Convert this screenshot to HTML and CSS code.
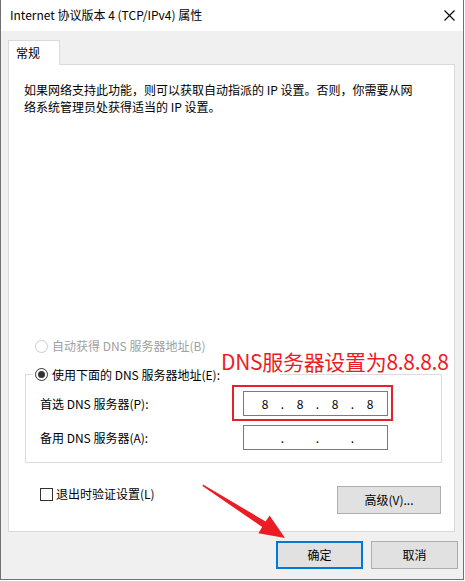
FILE: index.html
```html
<!DOCTYPE html>
<html lang="zh-CN">
<head>
<meta charset="utf-8">
<title>Internet 协议版本 4 (TCP/IPv4) 属性</title>
<link rel="stylesheet" href="styles.css">
</head>
<body>
<div class="window">
  <div class="titlebar">
    <span class="title">Internet 协议版本 4 (TCP/IPv4) 属性</span>
    <svg class="close" width="11" height="11" viewBox="0 0 11 11"><path d="M0.5 0.5 L10.5 10.5 M10.5 0.5 L0.5 10.5" stroke="#000" stroke-width="1.1" fill="none"/></svg>
  </div>
  <div class="content">
    <div class="tabs"><div class="tab">常规</div></div>
    <div class="panel">
      <p class="intro">如果网络支持此功能，则可以获取自动指派的 IP 设置。否则，你需要从网<br>络系统管理员处获得适当的 IP 设置。</p>

      <div class="radio-row disabled"><span class="radio"></span><span>自动获得 DNS 服务器地址(B)</span></div>

      <fieldset class="group">
        <legend class="radio-row"><span class="radio checked"></span><span>使用下面的 DNS 服务器地址(E):</span></legend>
        <div class="field-row">
          <span class="label">首选 DNS 服务器(P):</span>
          <div class="ip-wrap">
            <div class="ip"><span class="oct">8</span><span class="dot">.</span><span class="oct">8</span><span class="dot">.</span><span class="oct">8</span><span class="dot">.</span><span class="oct">8</span></div>
            <div class="mark-box"></div>
          </div>
        </div>
        <div class="field-row">
          <span class="label">备用 DNS 服务器(A):</span>
          <div class="ip-wrap">
            <div class="ip"><span class="oct"></span><span class="dot">.</span><span class="oct"></span><span class="dot">.</span><span class="oct"></span><span class="dot">.</span><span class="oct"></span></div>
          </div>
        </div>
      </fieldset>

      <div class="options-row">
        <label class="check-row"><span class="checkbox"></span><span>退出时验证设置(L)</span></label>
        <button class="btn adv">高级(V)...</button>
      </div>

      <div class="note">DNS服务器设置为8.8.8.8</div>
    </div>
    <div class="actions">
      <button class="btn primary">确定</button>
      <button class="btn">取消</button>
    </div>
  </div>
  <svg class="arrow" width="90" height="62" viewBox="200 480 90 62">
    <polygon points="203,484.5 265.6,521.5 269.6,515.6 285,538 258.4,533.2 262.2,527 202.5,486" fill="#ec1c24"/>
  </svg>
</div>
</body>
</html>
```

FILE: styles.css
```css
* { box-sizing: border-box; }

html, body {
  margin: 0;
  padding: 0;
  background: #ffffff;
}

body {
  font-family: "Noto Sans CJK SC", sans-serif;
  font-size: 12px;
  color: #000;
}

.window {
  position: relative;
  width: 464px;
  height: 580px;
  border: 1px solid #717171;
  border-top: 0;
  background: #f0f0f0;
  display: flex;
  flex-direction: column;
}

.titlebar {
  height: 31px;
  background: #ffffff;
  display: flex;
  align-items: center;
  justify-content: space-between;
  padding: 0 8px 0 9px;
  flex: none;
}

.title {
  line-height: 18px;
  padding-bottom: 1px;
}

.close {
  display: block;
  margin-bottom: 1px;
}

.content {
  padding: 9px 0 0 7px;
  display: flex;
  flex-direction: column;
}

.tabs {
  display: flex;
}

.tab {
  position: relative;
  z-index: 1;
  width: 52px;
  height: 25px;
  margin-bottom: -1px;
  padding: 3px 0 0 7px;
  line-height: 17px;
  background: #ffffff;
  border: 1px solid #d9d9d9;
  border-bottom: 0;
}

.panel {
  position: relative;
  width: 447px;
  height: 468px;
  background: #ffffff;
  border: 1px solid #d9d9d9;
  padding: 0 0 0 15px;
}

.intro {
  margin: 16px 0 0 0;
  line-height: 17px;
}

.radio-row {
  display: flex;
  align-items: center;
  gap: 4px;
  height: 18px;
  line-height: 18px;
}

.panel > .radio-row {
  margin: 222px 0 0 11px;
}

.radio-row.disabled {
  color: #a0a0a0;
}

.radio {
  width: 13px;
  height: 13px;
  border: 1px solid #333333;
  border-radius: 50%;
  background: #ffffff;
  display: flex;
  align-items: center;
  justify-content: center;
  flex: none;
}

.disabled .radio {
  border-color: #cccccc;
}

.radio.checked::after {
  content: "";
  width: 7px;
  height: 7px;
  border-radius: 50%;
  background: #333333;
}

.group {
  width: 417px;
  margin: 10px 0 0 1px;
  padding: 7px 0 12px 0;
  border: 1px solid #dcdcdc;
  min-width: 0;
}

.group legend {
  margin-left: 7px;
  padding: 0 60px 0 2px;
  height: 19px;
  line-height: 19px;
}

.field-row {
  display: grid;
  grid-template-columns: 217px 145px;
  align-items: center;
  height: 25px;
}

.field-row + .field-row {
  margin-top: 9px;
}

.label {
  padding-left: 14px;
  line-height: 18px;
}

.ip-wrap {
  position: relative;
}

.ip {
  height: 25px;
  border: 1px solid #7a7a7a;
  background: #ffffff;
  display: flex;
  align-items: center;
  padding-left: 6px;
  line-height: 18px;
}

.oct {
  width: 30px;
  text-align: center;
}

.dot {
  width: 5px;
  text-align: center;
}

.mark-box {
  position: absolute;
  left: -11px;
  top: -6px;
  width: 161px;
  height: 36px;
  border: 2px solid #e8202a;
}

.options-row {
  width: 417px;
  margin: 23px 0 0 1px;
  display: flex;
  justify-content: space-between;
  align-items: flex-start;
}

.check-row {
  display: flex;
  align-items: center;
  gap: 3px;
  margin: 1px 0 0 15px;
  height: 14px;
  line-height: 14px;
}

.checkbox {
  width: 13px;
  height: 13px;
  border: 1px solid #333333;
  background: #ffffff;
  flex: none;
}

.btn {
  font: inherit;
  color: #000;
  background: #e1e1e1;
  border: 1px solid #adadad;
  border-radius: 0;
  padding: 0;
  line-height: 18px;
}

.adv {
  width: 104px;
  height: 28px;
  margin-right: 1px;
}

.note {
  position: absolute;
  left: 212px;
  top: 283px;
  font-size: 21px;
  letter-spacing: -0.3px;
  line-height: 26px;
  color: #ec1c24;
  white-space: nowrap;
}

.actions {
  display: flex;
  justify-content: flex-end;
  gap: 8px;
  margin-top: 9px;
  padding-right: 5px;
}

.actions .btn {
  width: 87px;
  height: 28px;
}

.actions .primary {
  border: 2px solid #0078d7;
}

.arrow {
  position: absolute;
  left: 199px;
  top: 480px;
  pointer-events: none;
}
```
